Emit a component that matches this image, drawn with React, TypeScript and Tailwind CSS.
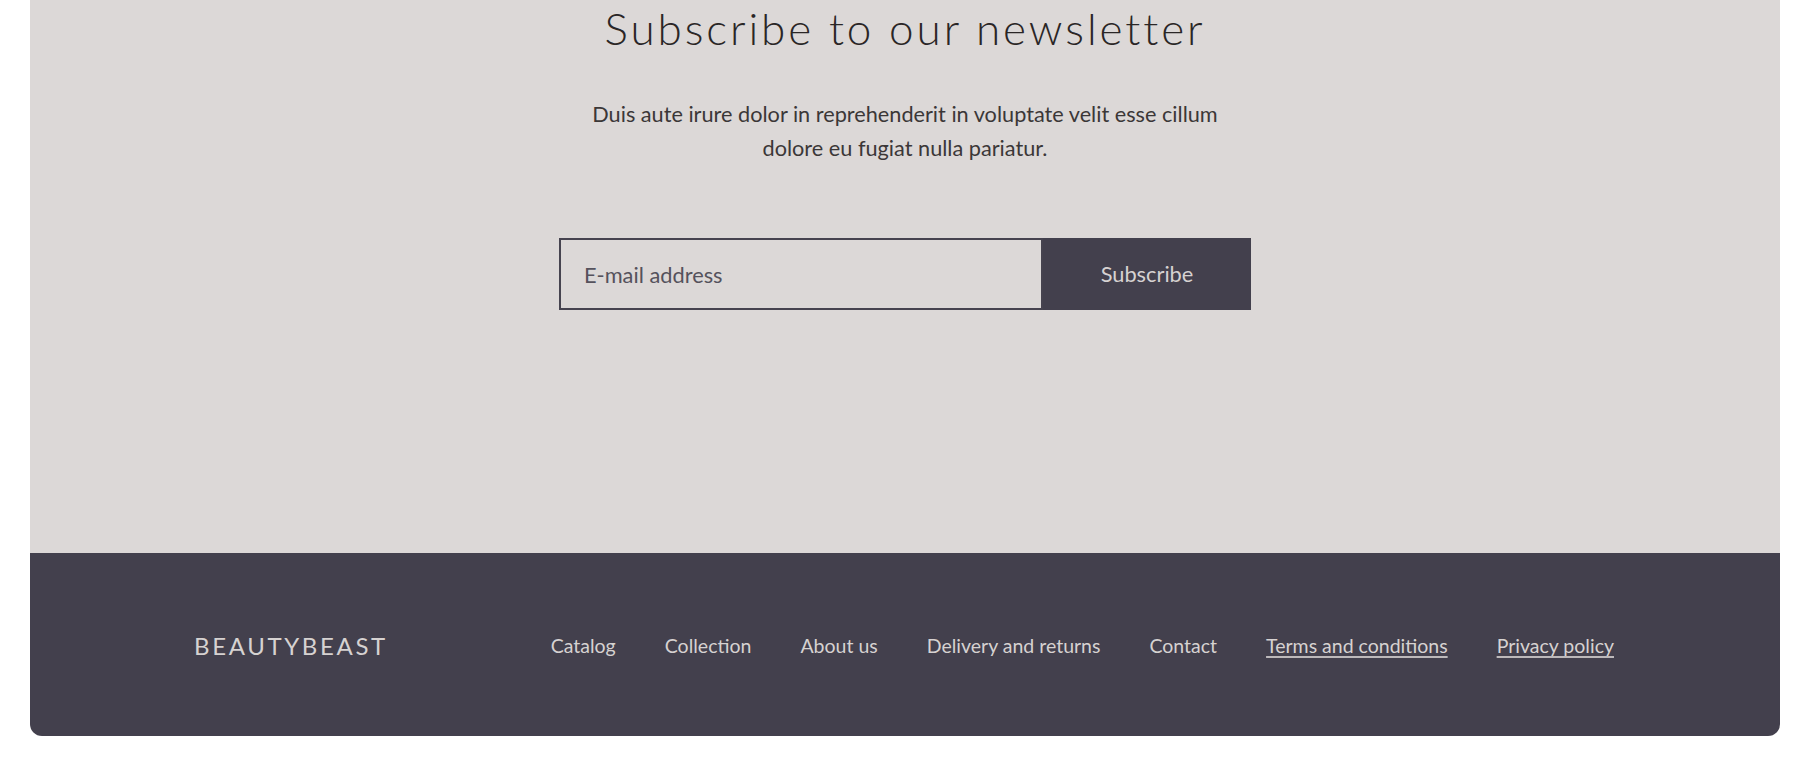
import React from "react";

const links = [
  { label: "Catalog", u: false },
  { label: "Collection", u: false },
  { label: "About us", u: false },
  { label: "Delivery and returns", u: false },
  { label: "Contact", u: false },
  { label: "Terms and conditions", u: true },
  { label: "Privacy policy", u: true },
];

export default function App() {
  return (
    <div
      className="min-h-screen bg-white px-[30px] pb-[21px]"
      style={{ fontFamily: "Lato, 'Open Sans', sans-serif" }}
    >
      <section className="flex flex-col items-center bg-[#dcd8d7] pt-[2px] pb-[243px]">
        <h2 className="text-[44px] leading-[53px] font-light tracking-[2.9px] text-[#2a2626]">
          Subscribe to our newsletter
        </h2>
        <p className="mt-[42px] max-w-[700px] text-center text-[21.7px] leading-[34px] text-[#3b3737]">
          Duis aute irure dolor in reprehenderit in voluptate velit esse cillum
          <br />
          dolore eu fugiat nulla pariatur.
        </p>
        <form className="mt-[73px] flex" onSubmit={(e) => e.preventDefault()}>
          <input
            type="email"
            placeholder="E-mail address"
            className="h-[72px] w-[484px] border-2 border-[#46434f] bg-transparent pl-[23px] text-[21.8px] text-[#3b3737] outline-none placeholder:text-[#55525c]"
          />
          <button
            type="submit"
            className="h-[72px] w-[208px] bg-[#43404d] text-[21.8px] text-[#d6d2d1]"
          >
            Subscribe
          </button>
        </form>
      </section>
      <footer className="flex h-[183px] items-center justify-between rounded-b-[12px] bg-[#43404d] pt-[3px] pl-[164px] pr-[166px]">
        <div className="text-[24px] tracking-[0.11em] text-[#d6d2d1]">BEAUTYBEAST</div>
        <nav className="flex items-center gap-[49px] text-[19.5px] text-[#d6d2d1]">
          {links.map((l) => (
            <a
              key={l.label}
              href="#"
              className={
                l.u
                  ? "underline decoration-[#bdb9bb] decoration-[1.5px] underline-offset-[3px]"
                  : ""
              }
            >
              {l.label}
            </a>
          ))}
        </nav>
      </footer>
    </div>
  );
}
